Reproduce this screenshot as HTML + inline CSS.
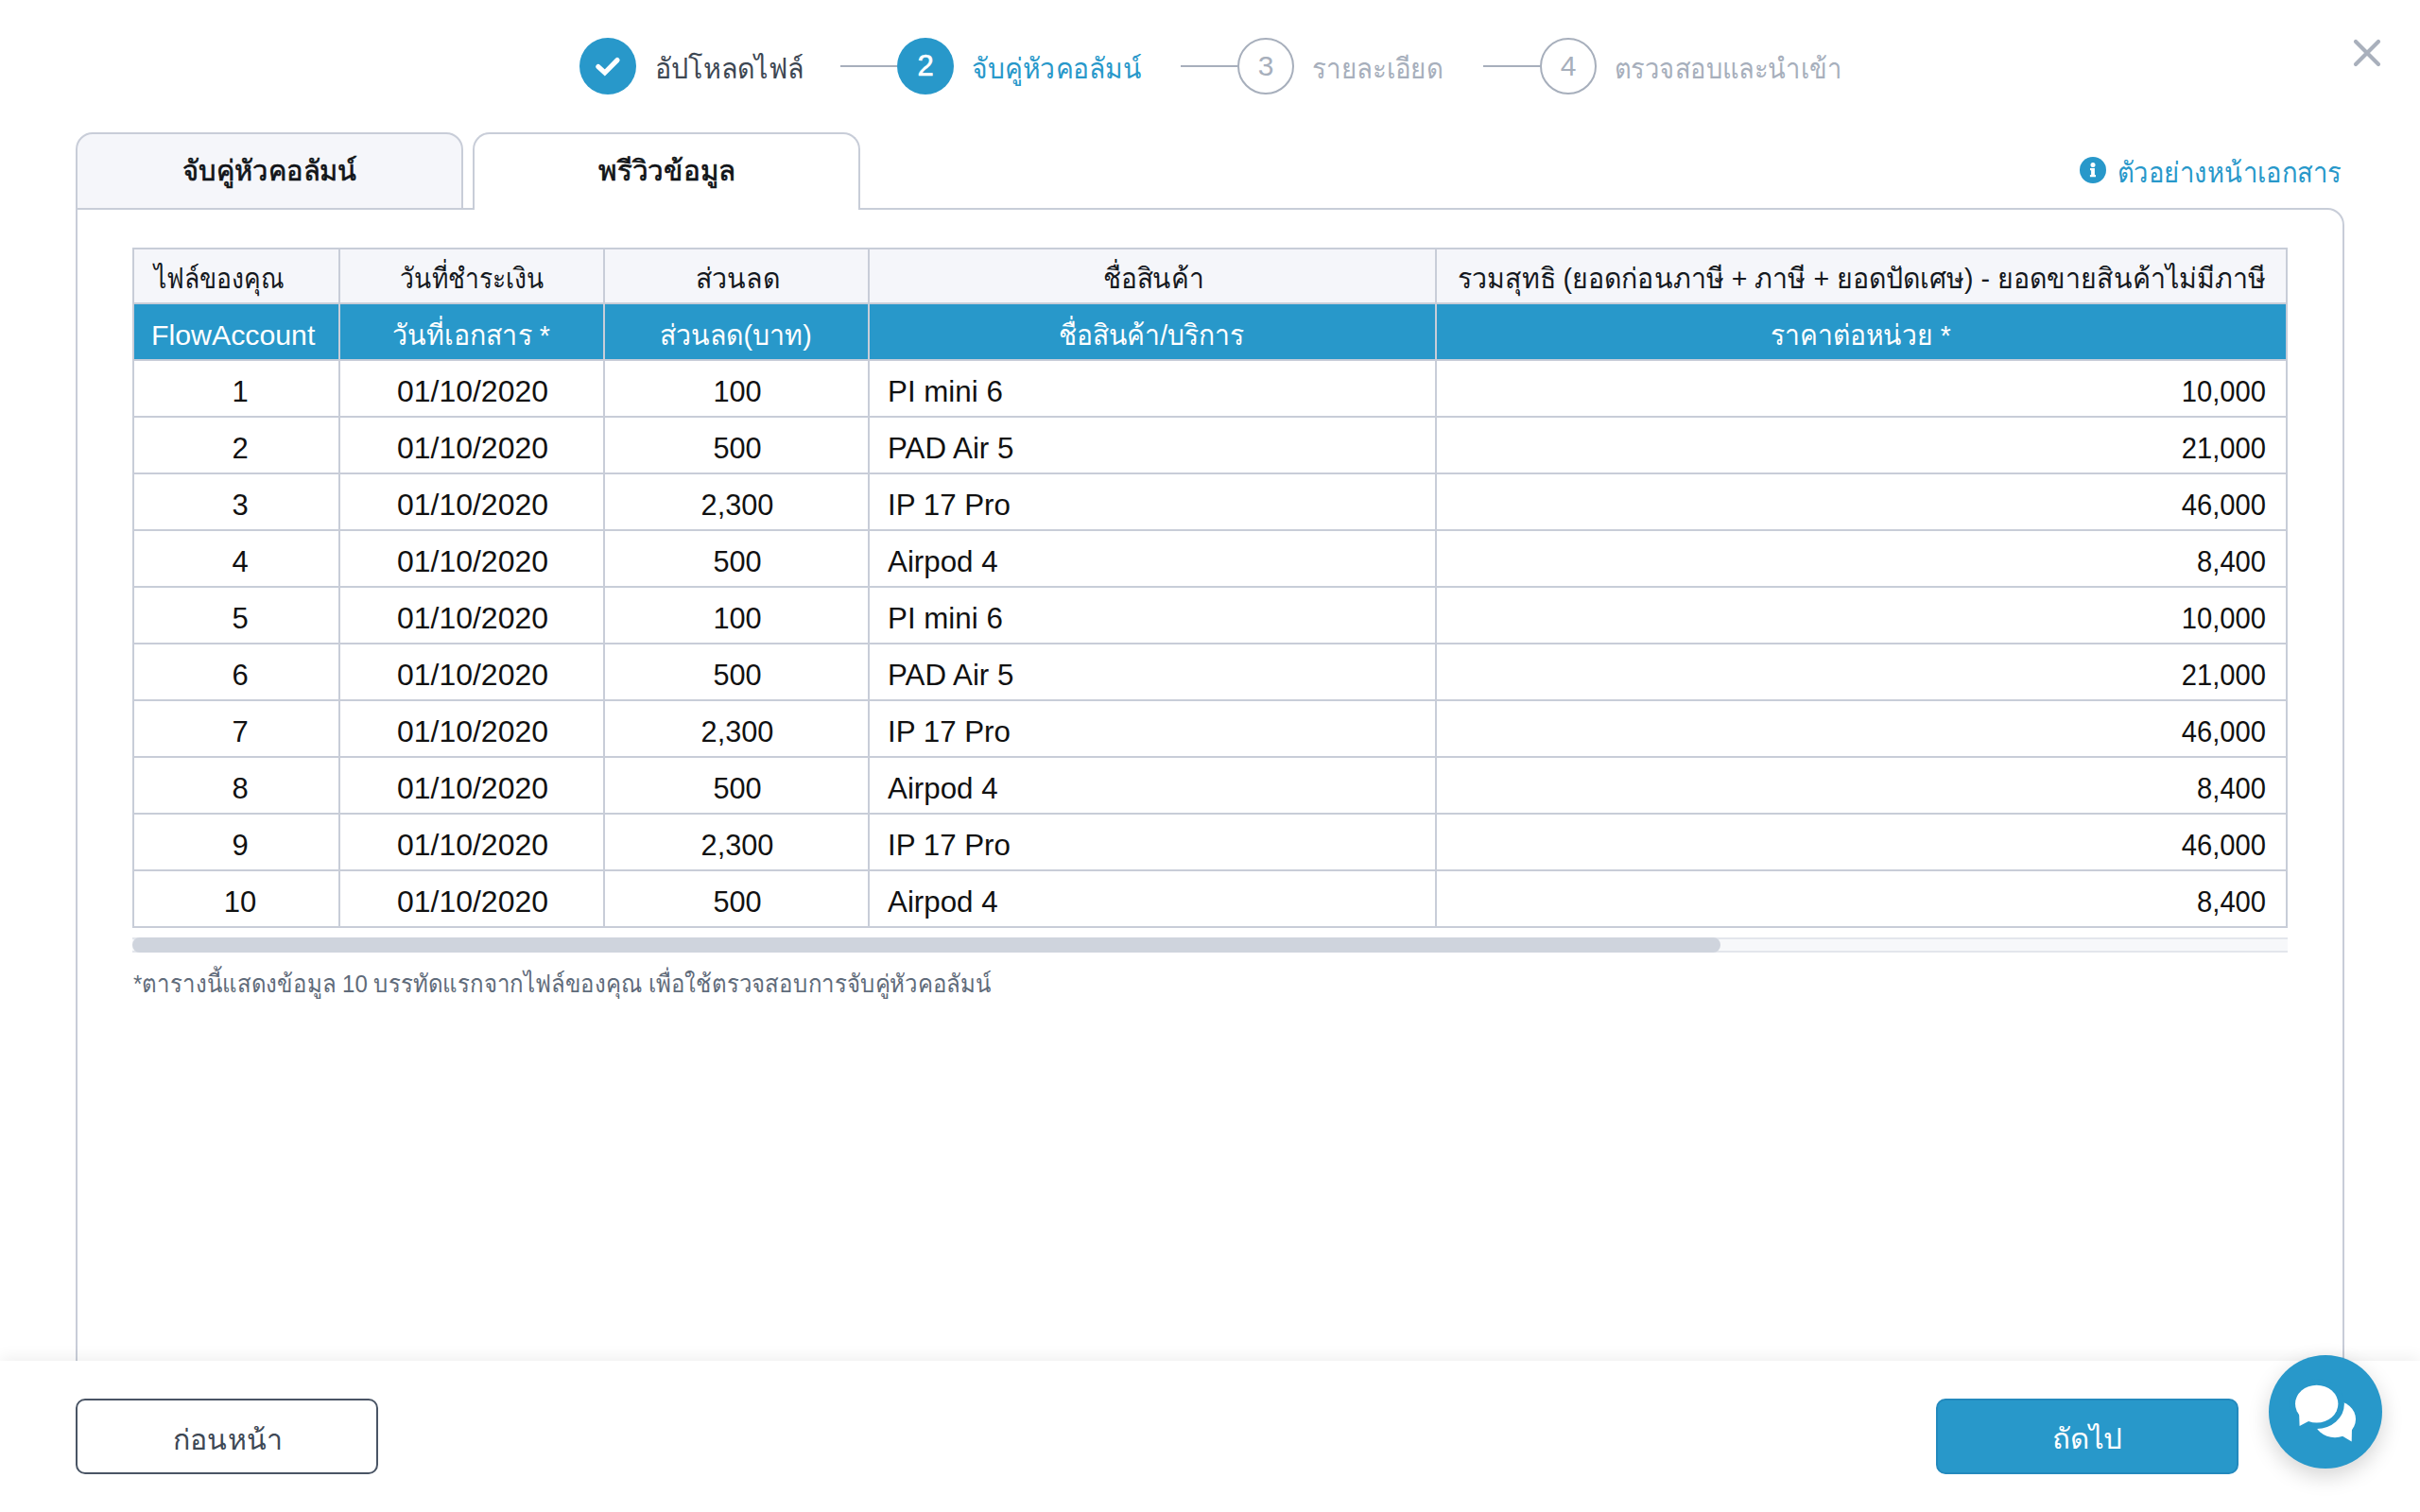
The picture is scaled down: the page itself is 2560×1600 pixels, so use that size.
<!DOCTYPE html>
<html><head><meta charset="utf-8">
<style>
html,body{margin:0;padding:0;}
body{width:2560px;height:1600px;position:relative;overflow:hidden;background:#fff;font-family:"Liberation Sans",sans-serif;}
.t,.d{position:absolute;white-space:nowrap;line-height:40px;transform-origin:0 0;}
.d{font-size:31px;color:#111;}
.circ{position:absolute;width:60px;height:60px;border-radius:50%;box-sizing:border-box;top:40px;}
.num{position:absolute;left:0;top:0;width:100%;text-align:center;font-size:30px;line-height:40px;}
.sline{position:absolute;top:69px;height:2px;width:60px;background:#a7afbc;}
.hl{position:absolute;left:140px;width:2280px;height:2px;background:#c8cdd8;}
.vl{position:absolute;top:262px;width:2px;height:720px;background:#c8cdd8;}
</style></head><body>
<!-- stepper -->
<div class="circ" style="left:613px;background:#2898ca">
<svg width="60" height="60" viewBox="0 0 60 60" style="position:absolute;left:0;top:0"><path d="M19.9 30.6 L26.8 37 L40 23.6" fill="none" stroke="#fff" stroke-width="5.2" stroke-linecap="round" stroke-linejoin="miter"/></svg>
</div>
<div class="sline" style="left:889px"></div>
<div class="circ" style="left:949px;background:#2898ca"><div class="num" id="n2" style="color:#fff;-webkit-text-stroke:0.6px #fff;font-size:31px;top:10px">2</div></div>
<div class="sline" style="left:1249px"></div>
<div class="circ" style="left:1309px;border:2px solid #a7afbc"><div class="num" style="color:#a7afbc;top:8px;left:-2px;width:60px">3</div></div>
<div class="sline" style="left:1569px"></div>
<div class="circ" style="left:1629px;border:2px solid #a7afbc"><div class="num" style="color:#a7afbc;top:8px;left:-2px;width:60px">4</div></div>
<svg width="40" height="40" viewBox="0 0 40 40" style="position:absolute;left:2484px;top:36px"><path d="M8 8 L32 32 M32 8 L8 32" stroke="#a9b0bc" stroke-width="4.2" stroke-linecap="round"/></svg>

<!-- tabs -->
<div style="position:absolute;left:80px;top:140px;width:410px;height:82px;box-sizing:border-box;border:2px solid #c8cdd8;border-radius:18px 18px 0 0;background:#f5f6fa"></div>
<div style="position:absolute;left:80px;top:220px;width:2400px;height:1300px;box-sizing:border-box;border:2px solid #c8cdd8;border-radius:0 18px 0 0;background:#fff"></div>
<div style="position:absolute;left:500px;top:140px;width:410px;height:82px;box-sizing:border-box;border:2px solid #c8cdd8;border-bottom:none;border-radius:18px 18px 0 0;background:#fff"></div><div style="position:absolute;left:502px;top:220px;width:406px;height:2px;background:#fff"></div>
<div style="position:absolute;left:490px;top:220px;width:10px;height:2px;background:#c8cdd8"></div>

<!-- info icon -->
<svg width="28" height="28" viewBox="0 0 28 28" style="position:absolute;left:2200px;top:166px">
<circle cx="14" cy="14" r="14" fill="#2898ca"/>
<circle cx="14" cy="8.4" r="2.5" fill="#fff"/>
<path d="M11 12 H15.9 V19 H17 V21.2 H10.9 V19 H12.1 V14.3 H11 Z" fill="#fff"/>
</svg>

<!-- table -->
<div style="position:absolute;left:140px;top:262px;width:2280px;height:60px;background:#f5f6fa"></div>
<div style="position:absolute;left:140px;top:320px;width:2280px;height:62px;background:#2898ca"></div>
<div class="hl" style="top:262px"></div><div class="hl" style="top:320px"></div><div class="hl" style="top:380px"></div><div class="hl" style="top:440px"></div><div class="hl" style="top:500px"></div><div class="hl" style="top:560px"></div><div class="hl" style="top:620px"></div><div class="hl" style="top:680px"></div><div class="hl" style="top:740px"></div><div class="hl" style="top:800px"></div><div class="hl" style="top:860px"></div><div class="hl" style="top:920px"></div><div class="hl" style="top:980px"></div><div class="vl" style="left:140px"></div><div class="vl" style="left:358px"></div><div class="vl" style="left:638px"></div><div class="vl" style="left:918px"></div><div class="vl" style="left:1518px"></div><div class="vl" style="left:2418px"></div>

<!-- scrollbar -->
<div style="position:absolute;left:140px;top:992px;width:2280px;height:16px;box-sizing:border-box;border-top:2px solid #e3e6ec;border-bottom:2px solid #e3e6ec;background:#f7f8fa"></div>
<div style="position:absolute;left:140px;top:992px;width:1680px;height:16px;border-radius:8px;background:#cfd4dd"></div>

<!-- footer -->
<div style="position:absolute;left:0;top:1440px;width:2560px;height:160px;background:#fff;box-shadow:0 -3px 16px rgba(0,0,0,0.07)"></div>
<div style="position:absolute;left:80px;top:1480px;width:320px;height:80px;box-sizing:border-box;border:2px solid #4a5565;border-radius:10px;background:#fff"></div>
<div style="position:absolute;left:2048px;top:1480px;width:320px;height:80px;box-sizing:border-box;border:2px solid #2389bd;border-radius:10px;background:#2898ca"></div>
<div style="position:absolute;left:2400px;top:1434px;width:120px;height:120px;border-radius:50%;background:#2898ca;box-shadow:0 8px 22px rgba(0,0,0,0.17)">
<svg width="120" height="120" viewBox="0 0 120 120" style="position:absolute;left:0;top:0">
<ellipse cx="70" cy="67.7" rx="22" ry="19.5" fill="#fff"/>
<path d="M76 84.5 L87.7 91.4 L88 76 Z" fill="#fff"/>
<ellipse cx="50.7" cy="51.6" rx="22.7" ry="19.9" fill="#2898ca" stroke="#2898ca" stroke-width="13"/>
<ellipse cx="50.7" cy="51.6" rx="22.7" ry="19.9" fill="#fff"/>
<path d="M32.1 61 L32.6 75 L43 69.5 Z" fill="#fff"/>
</svg>
</div>

<div class="t" id="s1" style="left:692.61px;top:52.60px;font-size:30px;color:#3d4753;transform:scaleX(0.9565)">อัปโหลดไฟล์</div><div class="t" id="s2" style="left:1028.12px;top:52.60px;font-size:30px;color:#2898ca;transform:scaleX(0.9415)">จับคู่หัวคอลัมน์</div><div class="t" id="s3" style="left:1388.15px;top:52.60px;font-size:30px;color:#a7afbc;transform:scaleX(0.9247)">รายละเอียด</div><div class="t" id="s4" style="left:1708.18px;top:52.60px;font-size:30px;color:#a7afbc;transform:scaleX(0.9112)">ตรวจสอบและนำเข้า</div><div class="t" id="t1" style="left:192.85px;top:160.60px;font-size:30px;color:#111418;-webkit-text-stroke:0.7px #111418;transform:scaleX(0.9674)">จับคู่หัวคอลัมน์</div><div class="t" id="t2" style="left:633.00px;top:160.60px;font-size:30px;color:#111418;-webkit-text-stroke:0.7px #111418;transform:scaleX(0.9863)">พรีวิวข้อมูล</div><div class="t" id="info" style="left:2240.17px;top:162.60px;font-size:30px;color:#2898ca;transform:scaleX(0.9141)">ตัวอย่างหน้าเอกสาร</div><div class="t" id="h1a" style="left:162.90px;top:274.61px;font-size:30px;color:#15191e;transform:scaleX(0.8828)">ไฟล์ของคุณ</div><div class="t" id="h1b" style="left:423.23px;top:274.61px;font-size:30px;color:#15191e;transform:scaleX(0.8824)">วันที่ชำระเงิน</div><div class="t" id="h1c" style="left:735.62px;top:274.61px;font-size:30px;color:#15191e;transform:scaleX(0.9551)">ส่วนลด</div><div class="t" id="h1d" style="left:1167.13px;top:274.61px;font-size:30px;color:#15191e;transform:scaleX(0.9358)">ชื่อสินค้า</div><div class="t" id="h1e" style="left:1542.10px;top:274.61px;font-size:30px;color:#15191e;transform:scaleX(0.9509)">รวมสุทธิ (ยอดก่อนภาษี + ภาษี + ยอดปัดเศษ) - ยอดขายสินค้าไม่มีภาษี</div><div class="t" id="h2a" style="left:160.08px;top:334.61px;font-size:30px;color:#ffffff;transform:scaleX(1.0095)">FlowAccount</div><div class="t" id="h2b" style="left:415.09px;top:334.61px;font-size:30px;color:#ffffff;transform:scaleX(0.9535)">วันที่เอกสาร *</div><div class="t" id="h2c" style="left:698.10px;top:334.61px;font-size:30px;color:#ffffff;transform:scaleX(0.9515)">ส่วนลด(บาท)</div><div class="t" id="h2d" style="left:1120.12px;top:334.61px;font-size:30px;color:#ffffff;transform:scaleX(0.9415)">ชื่อสินค้า/บริการ</div><div class="t" id="h2e" style="left:1873.12px;top:334.61px;font-size:30px;color:#ffffff;transform:scaleX(0.9400)">ราคาต่อหน่วย *</div><div class="t" id="foot" style="left:141.08px;top:1020.99px;font-size:26px;color:#5f6b7a;transform:scaleX(0.9235)">*ตารางนี้แสดงข้อมูล 10 บรรทัดแรกจากไฟล์ของคุณ เพื่อใช้ตรวจสอบการจับคู่หัวคอลัมน์</div><div class="t" id="bprev" style="left:182.98px;top:1503.61px;font-size:30px;color:#3e4855;transform:scaleX(1.0091)">ก่อนหน้า</div><div class="t" id="bnext" style="left:2170.91px;top:1502.61px;font-size:30px;color:#ffffff;transform:scaleX(1.0448)">ถัดไป</div>
<div class="d" style="left:-46px;width:600px;text-align:center;transform-origin:50% 0;top:394.76px;transform:scaleX(1.0000)">1</div><div class="d" style="left:199.75px;width:600px;text-align:center;transform-origin:50% 0;top:394.76px;transform:scaleX(1.0300)">01/10/2020</div><div class="d" style="left:479.6px;width:600px;text-align:center;transform-origin:50% 0;top:394.76px;transform:scaleX(0.9900)">100</div><div class="d" style="left:938.5px;transform-origin:0 0;top:394.76px;transform:scaleX(1.0100)">PI mini 6</div><div class="d" style="left:1797px;width:600px;text-align:right;transform-origin:100% 0;top:394.76px;transform:scaleX(0.9400)">10,000</div><div class="d" style="left:-46px;width:600px;text-align:center;transform-origin:50% 0;top:454.76px;transform:scaleX(1.0000)">2</div><div class="d" style="left:199.75px;width:600px;text-align:center;transform-origin:50% 0;top:454.76px;transform:scaleX(1.0300)">01/10/2020</div><div class="d" style="left:479.6px;width:600px;text-align:center;transform-origin:50% 0;top:454.76px;transform:scaleX(0.9900)">500</div><div class="d" style="left:938.5px;transform-origin:0 0;top:454.76px;transform:scaleX(1.0100)">PAD Air 5</div><div class="d" style="left:1797px;width:600px;text-align:right;transform-origin:100% 0;top:454.76px;transform:scaleX(0.9400)">21,000</div><div class="d" style="left:-46px;width:600px;text-align:center;transform-origin:50% 0;top:514.76px;transform:scaleX(1.0000)">3</div><div class="d" style="left:199.75px;width:600px;text-align:center;transform-origin:50% 0;top:514.76px;transform:scaleX(1.0300)">01/10/2020</div><div class="d" style="left:479.6px;width:600px;text-align:center;transform-origin:50% 0;top:514.76px;transform:scaleX(0.9900)">2,300</div><div class="d" style="left:938.5px;transform-origin:0 0;top:514.76px;transform:scaleX(1.0100)">IP 17 Pro</div><div class="d" style="left:1797px;width:600px;text-align:right;transform-origin:100% 0;top:514.76px;transform:scaleX(0.9400)">46,000</div><div class="d" style="left:-46px;width:600px;text-align:center;transform-origin:50% 0;top:574.76px;transform:scaleX(1.0000)">4</div><div class="d" style="left:199.75px;width:600px;text-align:center;transform-origin:50% 0;top:574.76px;transform:scaleX(1.0300)">01/10/2020</div><div class="d" style="left:479.6px;width:600px;text-align:center;transform-origin:50% 0;top:574.76px;transform:scaleX(0.9900)">500</div><div class="d" style="left:938.5px;transform-origin:0 0;top:574.76px;transform:scaleX(1.0100)">Airpod 4</div><div class="d" style="left:1797px;width:600px;text-align:right;transform-origin:100% 0;top:574.76px;transform:scaleX(0.9400)">8,400</div><div class="d" style="left:-46px;width:600px;text-align:center;transform-origin:50% 0;top:634.76px;transform:scaleX(1.0000)">5</div><div class="d" style="left:199.75px;width:600px;text-align:center;transform-origin:50% 0;top:634.76px;transform:scaleX(1.0300)">01/10/2020</div><div class="d" style="left:479.6px;width:600px;text-align:center;transform-origin:50% 0;top:634.76px;transform:scaleX(0.9900)">100</div><div class="d" style="left:938.5px;transform-origin:0 0;top:634.76px;transform:scaleX(1.0100)">PI mini 6</div><div class="d" style="left:1797px;width:600px;text-align:right;transform-origin:100% 0;top:634.76px;transform:scaleX(0.9400)">10,000</div><div class="d" style="left:-46px;width:600px;text-align:center;transform-origin:50% 0;top:694.76px;transform:scaleX(1.0000)">6</div><div class="d" style="left:199.75px;width:600px;text-align:center;transform-origin:50% 0;top:694.76px;transform:scaleX(1.0300)">01/10/2020</div><div class="d" style="left:479.6px;width:600px;text-align:center;transform-origin:50% 0;top:694.76px;transform:scaleX(0.9900)">500</div><div class="d" style="left:938.5px;transform-origin:0 0;top:694.76px;transform:scaleX(1.0100)">PAD Air 5</div><div class="d" style="left:1797px;width:600px;text-align:right;transform-origin:100% 0;top:694.76px;transform:scaleX(0.9400)">21,000</div><div class="d" style="left:-46px;width:600px;text-align:center;transform-origin:50% 0;top:754.76px;transform:scaleX(1.0000)">7</div><div class="d" style="left:199.75px;width:600px;text-align:center;transform-origin:50% 0;top:754.76px;transform:scaleX(1.0300)">01/10/2020</div><div class="d" style="left:479.6px;width:600px;text-align:center;transform-origin:50% 0;top:754.76px;transform:scaleX(0.9900)">2,300</div><div class="d" style="left:938.5px;transform-origin:0 0;top:754.76px;transform:scaleX(1.0100)">IP 17 Pro</div><div class="d" style="left:1797px;width:600px;text-align:right;transform-origin:100% 0;top:754.76px;transform:scaleX(0.9400)">46,000</div><div class="d" style="left:-46px;width:600px;text-align:center;transform-origin:50% 0;top:814.76px;transform:scaleX(1.0000)">8</div><div class="d" style="left:199.75px;width:600px;text-align:center;transform-origin:50% 0;top:814.76px;transform:scaleX(1.0300)">01/10/2020</div><div class="d" style="left:479.6px;width:600px;text-align:center;transform-origin:50% 0;top:814.76px;transform:scaleX(0.9900)">500</div><div class="d" style="left:938.5px;transform-origin:0 0;top:814.76px;transform:scaleX(1.0100)">Airpod 4</div><div class="d" style="left:1797px;width:600px;text-align:right;transform-origin:100% 0;top:814.76px;transform:scaleX(0.9400)">8,400</div><div class="d" style="left:-46px;width:600px;text-align:center;transform-origin:50% 0;top:874.76px;transform:scaleX(1.0000)">9</div><div class="d" style="left:199.75px;width:600px;text-align:center;transform-origin:50% 0;top:874.76px;transform:scaleX(1.0300)">01/10/2020</div><div class="d" style="left:479.6px;width:600px;text-align:center;transform-origin:50% 0;top:874.76px;transform:scaleX(0.9900)">2,300</div><div class="d" style="left:938.5px;transform-origin:0 0;top:874.76px;transform:scaleX(1.0100)">IP 17 Pro</div><div class="d" style="left:1797px;width:600px;text-align:right;transform-origin:100% 0;top:874.76px;transform:scaleX(0.9400)">46,000</div><div class="d" style="left:-46px;width:600px;text-align:center;transform-origin:50% 0;top:934.76px;transform:scaleX(1.0000)">10</div><div class="d" style="left:199.75px;width:600px;text-align:center;transform-origin:50% 0;top:934.76px;transform:scaleX(1.0300)">01/10/2020</div><div class="d" style="left:479.6px;width:600px;text-align:center;transform-origin:50% 0;top:934.76px;transform:scaleX(0.9900)">500</div><div class="d" style="left:938.5px;transform-origin:0 0;top:934.76px;transform:scaleX(1.0100)">Airpod 4</div><div class="d" style="left:1797px;width:600px;text-align:right;transform-origin:100% 0;top:934.76px;transform:scaleX(0.9400)">8,400</div>
</body></html>
